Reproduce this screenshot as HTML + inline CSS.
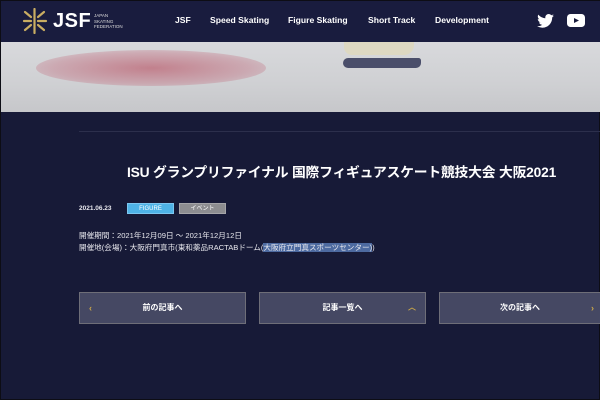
<!DOCTYPE html>
<html><head><meta charset="utf-8"><style>
*{margin:0;padding:0;box-sizing:border-box}
body{width:600px;height:400px;overflow:hidden;background:#171a37;font-family:"Liberation Sans","Noto Sans CJK JP",sans-serif;color:#fff;position:relative;border:1px solid #0d0d15}
.hdr{position:absolute;left:0;top:0;width:600px;height:41px;background:#191c3e}
.nav{position:absolute;top:14px;font-size:8.6px;font-weight:bold;color:#fff}
.hero{position:absolute;left:0;top:41px;width:600px;height:70px;background:linear-gradient(180deg,#d8d9dc,#cfd0d3 60%,#c6c7ca);overflow:hidden}
.line{position:absolute;left:78px;top:130px;width:522px;height:1px;background:#2c2f4c}
.title{position:absolute;left:126px;top:160px;font-size:13.8px;font-weight:bold;white-space:nowrap;letter-spacing:-0.2px}
.sm{position:absolute;font-size:7.6px;color:#e8e8ee;white-space:nowrap}
.tag{position:absolute;top:202px;height:11px;font-size:6px;text-align:center;line-height:11px}
.btn{position:absolute;top:291px;height:32px;background:#454863;border:1px solid #6e6e78;font-size:8px;font-weight:bold;text-align:center;line-height:30px}
.ar{position:absolute;top:0;color:#c9a64a;font-size:9px;line-height:30px}
</style></head><body>
<div class="hdr">
<svg style="position:absolute;left:20px;top:7px" width="27" height="26" viewBox="0 0 27 26">
<g stroke="#c9ad62" stroke-width="2.2" stroke-linecap="round">
<line x1="13.5" y1="1" x2="13.5" y2="25"/>
<line x1="3" y1="13" x2="10" y2="13"/><line x1="17" y1="13" x2="25" y2="13"/>
<line x1="4" y1="4" x2="10" y2="9"/><line x1="23" y1="4" x2="17" y2="9"/>
<line x1="4" y1="22" x2="10" y2="17"/><line x1="23" y1="22" x2="17" y2="17"/>
</g></svg>
<div style="position:absolute;left:52px;top:9px;font-size:20px;font-weight:bold;letter-spacing:0.5px">JSF</div>
<div style="position:absolute;left:93px;top:12px;font-size:4.5px;line-height:5.5px;color:#ddd">JAPAN<br>SKATING<br>FEDERATION</div>
<div class="nav" style="left:174px">JSF</div>
<div class="nav" style="left:209px">Speed Skating</div>
<div class="nav" style="left:287px">Figure Skating</div>
<div class="nav" style="left:367px">Short Track</div>
<div class="nav" style="left:434px">Development</div>
<svg style="position:absolute;left:536px;top:13px" width="17" height="14" viewBox="0 0 24 20"><path fill="#fff" d="M24 2.4c-.9.4-1.8.7-2.8.8 1-.6 1.8-1.6 2.2-2.7-1 .6-2 1-3.1 1.2C19.3.7 18 0 16.6 0c-2.7 0-4.9 2.200-4.9 4.9 0 .4 0 .8.1 1.1C7.7 5.8 4.1 3.9 1.7.9c-.4.7-.7 1.6-.7 2.5 0 1.7.9 3.2 2.2 4.1-.8 0-1.6-.2-2.2-.6v.1c0 2.4 1.7 4.4 3.9 4.8-.4.1-.8.2-1.3.2-.3 0-.6 0-.9-.1.6 2 2.4 3.4 4.6 3.4-1.7 1.3-3.800 2.1-6.1 2.1H0c2.2 1.4 4.8 2.2 7.5 2.2 9.1 0 14-7.5 14-14v-.6c1-.7 1.8-1.6 2.5-2.6z"/></svg>
<svg style="position:absolute;left:566px;top:13px" width="18" height="13" viewBox="0 0 18 13"><rect width="18" height="13" rx="3.5" fill="#fff"/><path d="M7 4l5 2.5L7 9z" fill="#191c3e"/></svg>
</div>
<div class="hero">
<div style="position:absolute;left:35px;top:8px;width:230px;height:36px;border-radius:50%;background:radial-gradient(ellipse,rgba(180,60,80,.55),rgba(190,90,110,.35) 60%,rgba(200,150,160,0) 100%)"></div>
<div style="position:absolute;left:343px;top:0;width:70px;height:13px;background:#ddd8c2;border-radius:0 0 10px 8px"></div>
<div style="position:absolute;left:342px;top:16px;width:78px;height:10px;background:#4a4e6a;border-radius:6px 3px 6px 6px"></div>
</div>
<div class="line"></div>
<div class="title">ISU グランプリファイナル 国際フィギュアスケート競技大会 大阪2021</div>
<div class="sm" style="left:78px;top:204px;font-weight:bold;font-size:6.5px">2021.06.23</div>
<div class="tag" style="left:126px;width:47px;background:#4fb3e6;border:1px solid #7dc7f0">FIGURE</div>
<div class="tag" style="left:178px;width:47px;background:#8d8d90;border:1px solid #a5a5a8">イベント</div>
<div class="sm" style="left:78px;top:229px">開催期間：2021年12月09日 ～ 2021年12月12日</div>
<div class="sm" style="left:78px;top:241px">開催地(会場)：大阪府門真市(東和薬品RACTABドーム(<span style="background:#4d6aa0">大阪府立門真スポーツセンター)</span>)</div>
<div class="btn" style="left:78px;width:167px"><span class="ar" style="left:9px">‹</span>前の記事へ</div>
<div class="btn" style="left:258px;width:167px">記事一覧へ<span class="ar" style="right:9px;font-size:8px">︿</span></div>
<div class="btn" style="left:438px;width:162px">次の記事へ<span class="ar" style="right:6px">›</span></div>
</body></html>
